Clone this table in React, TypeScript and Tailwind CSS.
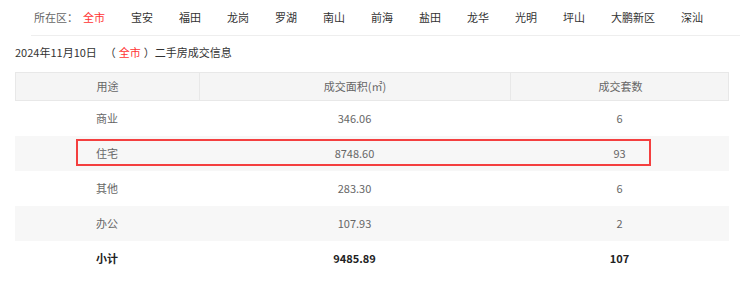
const districts = ["全市", "宝安", "福田", "龙岗", "罗湖", "南山", "前海", "盐田", "龙华", "光明", "坪山", "大鹏新区", "深汕"];

const rows = [
  { use: "商业", area: "346.06", count: "6" },
  { use: "住宅", area: "8748.60", count: "93", marked: true },
  { use: "其他", area: "283.30", count: "6" },
  { use: "办公", area: "107.93", count: "2" },
];

export default function App() {
  return (
    <div className="w-[740px] h-[288px] bg-white font-['Noto_Sans_CJK_SC',sans-serif] text-[11px] text-[#666] overflow-hidden">
      <div className="ml-[31px] h-[36px] border-b border-[#eee] flex items-center pl-[3px]">
        <span className="text-[#666]">所在区：</span>
        <div className="flex items-center gap-[26px] ml-[5px]">
          {districts.map((d, i) => (
            <span key={d} className={i === 0 ? "text-[#f33]" : "text-[#333]"}>
              {d}
            </span>
          ))}
        </div>
      </div>

      <div className="ml-[15px] mt-[6px] h-[20px] flex items-center text-[#333] text-[11px]">
        <span>2024年11月10日</span>
        <span className="ml-[8px]">（</span>
        <span className="text-[#f33] px-[3px]">全市</span>
        <span>）二手房成交信息</span>
      </div>

      <div className="ml-[15px] mt-[10px] w-[714px]">
        <div className="grid grid-cols-[184px_311px_219px] h-[29px] bg-[#f5f5f5] border border-[#e8e8e8] text-[#666]">
          <div className="flex items-center justify-center border-r border-[#e8e8e8]">用途</div>
          <div className="flex items-center justify-center border-r border-[#e8e8e8]">成交面积(㎡)</div>
          <div className="flex items-center justify-center">成交套数</div>
        </div>
        {rows.map((r, i) => (
          <div
            key={r.use}
            className={
              "relative grid grid-cols-[184px_311px_219px] h-[35px] " + (i % 2 === 1 ? "bg-[#f7f7f7]" : "bg-white")
            }
          >
            <div className="flex items-center justify-center">{r.use}</div>
            <div className="flex items-center justify-center">{r.area}</div>
            <div className="flex items-center justify-center">{r.count}</div>
            {r.marked && (
              <div className="absolute left-[61px] right-[78px] top-[3px] bottom-[5px] border-2 border-[#f43f3f]" />
            )}
          </div>
        ))}
        <div className="grid grid-cols-[184px_311px_219px] h-[35px] font-bold text-[#222]">
          <div className="flex items-center justify-center">小计</div>
          <div className="flex items-center justify-center">9485.89</div>
          <div className="flex items-center justify-center">107</div>
        </div>
      </div>
    </div>
  );
}
